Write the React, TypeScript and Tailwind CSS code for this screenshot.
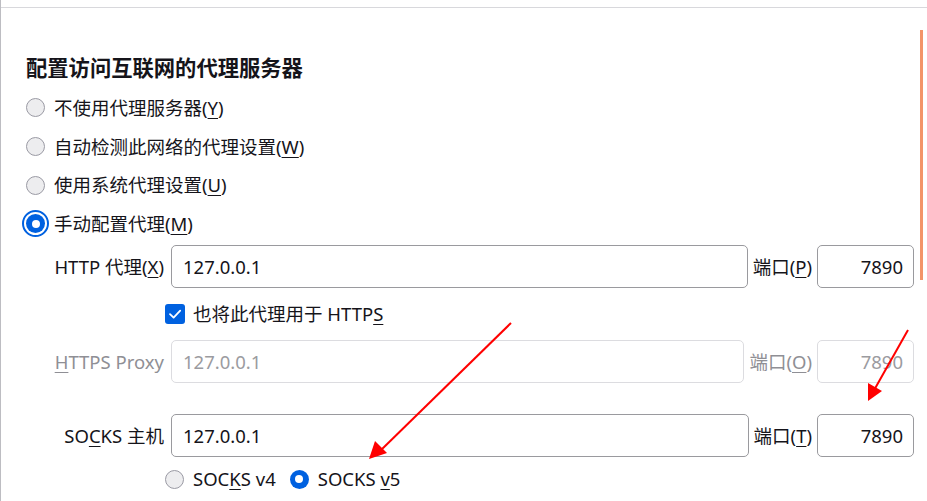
const font = { fontFamily: '"Noto Sans", "Noto Sans CJK SC", sans-serif' };

const U = ({ children }: { children: string }) => (
  <span className="underline underline-offset-[3px] decoration-1">{children}</span>
);

const Radio = ({ checked, focused }: { checked?: boolean; focused?: boolean }) => {
  if (checked) {
    return (
      <span
        className={`flex items-center justify-center shrink-0 w-[19px] h-[19px] rounded-full bg-[#0061e0] ${
          focused ? "outline-2 outline-[#0061e0] outline-offset-[2px]" : ""
        }`}
      >
        <span className="w-[8px] h-[8px] rounded-full bg-white" />
      </span>
    );
  }
  return (
    <span className="shrink-0 w-[19px] h-[19px] rounded-full bg-[#ededef] border border-[#9a9aa4]" />
  );
};

const RadioRow = ({
  children,
  checked,
  focused,
  className = "",
}: {
  children: React.ReactNode;
  checked?: boolean;
  focused?: boolean;
  className?: string;
}) => (
  <div className={`flex items-center gap-[9px] ${className}`}>
    <Radio checked={checked} focused={focused} />
    <span>{children}</span>
  </div>
);

interface ProxyRowProps {
  label: React.ReactNode;
  host: string;
  portLabel: React.ReactNode;
  port: string;
  disabled?: boolean;
}

const ProxyRow = ({ label, host, portLabel, port, disabled }: ProxyRowProps) => {
  const box = disabled
    ? "border-[#dcdce0] text-[#9b9ba0]"
    : "border-[#9a9a9e] text-[#15141a]";
  return (
    <div className={`flex items-center h-[43px] ${disabled ? "text-[#8f8f95]" : ""}`}>
      <div className="w-[138px] shrink-0 text-right whitespace-nowrap">{label}</div>
      <div
        className={`ml-[7px] flex-1 h-full flex items-center rounded-[5px] border bg-white pl-[11px] ${box}`}
      >
        {host}
      </div>
      <div className="ml-[5px] mr-[5px] shrink-0">{portLabel}</div>
      <div
        className={`w-[97px] shrink-0 h-full flex items-center justify-end rounded-[5px] border bg-white pr-[10px] ${box}`}
      >
        {port}
      </div>
    </div>
  );
};

export default function App() {
  return (
    <div
      className="relative w-[927px] h-[501px] overflow-hidden bg-white text-[#15141a] text-[18.5px] border-l border-[#bdbdc2]"
      style={font}
    >
      <div className="h-[8px] border-b border-[#d8d8dc]" />

      <div className="pl-[25px] pr-[13px]">
        <h2 className="mt-[46px] h-[28px] flex items-center text-[21.3px] font-bold">
          配置访问互联网的代理服务器
        </h2>

        <div className="mt-[6px] flex flex-col">
          <RadioRow className="h-[39px]">
            不使用代理服务器(<U>Y</U>)
          </RadioRow>
          <RadioRow className="h-[39px]">
            自动检测此网络的代理设置(<U>W</U>)
          </RadioRow>
          <RadioRow className="h-[38px]">
            使用系统代理设置(<U>U</U>)
          </RadioRow>
          <RadioRow className="h-[39px]" checked focused>
            手动配置代理(<U>M</U>)
          </RadioRow>
        </div>

        <div className="mt-[2px]">
          <ProxyRow
            label={<>HTTP 代理(<U>X</U>)</>}
            host="127.0.0.1"
            portLabel={<>端口(<U>P</U>)</>}
            port="7890"
          />
        </div>

        <div className="h-[52px] flex items-center ml-[139px] gap-[8px]">
          <span className="w-[20px] h-[20px] rounded-[3px] bg-[#0061e0] flex items-center justify-center">
            <svg width="14" height="14" viewBox="0 0 14 14" fill="none">
              <path d="M2 7.2 L5.6 10.6 L12.2 3.6" stroke="white" strokeWidth="1.8" strokeLinecap="round" strokeLinejoin="round" />
            </svg>
          </span>
          <span>
            也将此代理用于 HTTP<U>S</U>
          </span>
        </div>

        <ProxyRow
          disabled
          label={<><U>H</U>TTPS Proxy</>}
          host="127.0.0.1"
          portLabel={<>端口(<U>O</U>)</>}
          port="7890"
        />

        <div className="mt-[31px]">
          <ProxyRow
            label={<>SO<U>C</U>KS 主机</>}
            host="127.0.0.1"
            portLabel={<>端口(<U>T</U>)</>}
            port="7890"
          />
        </div>

        <div className="h-[44px] flex items-center ml-[139px] gap-[8px]">
          <RadioRow>
            SOC<U>K</U>S v4
          </RadioRow>
          <RadioRow checked className="ml-[6px]">
            SOCKS <U>v</U>5
          </RadioRow>
        </div>
      </div>

      {/* scrollbar thumb */}
      <div className="absolute left-[919px] top-[30px] w-[3px] h-[250px] bg-[#f39468]" />

      {/* annotation arrows */}
      <svg className="absolute inset-0 pointer-events-none" width="927" height="501">
        <line x1="510" y1="323" x2="378" y2="452" stroke="#ff0000" strokeWidth="2" />
        <polygon points="368,459 374,441 386,453" fill="#ff0000" />
        <line x1="907" y1="330" x2="872" y2="392" stroke="#ff0000" strokeWidth="2" />
        <polygon points="867,401 867,383 881,391" fill="#ff0000" />
      </svg>
    </div>
  );
}
